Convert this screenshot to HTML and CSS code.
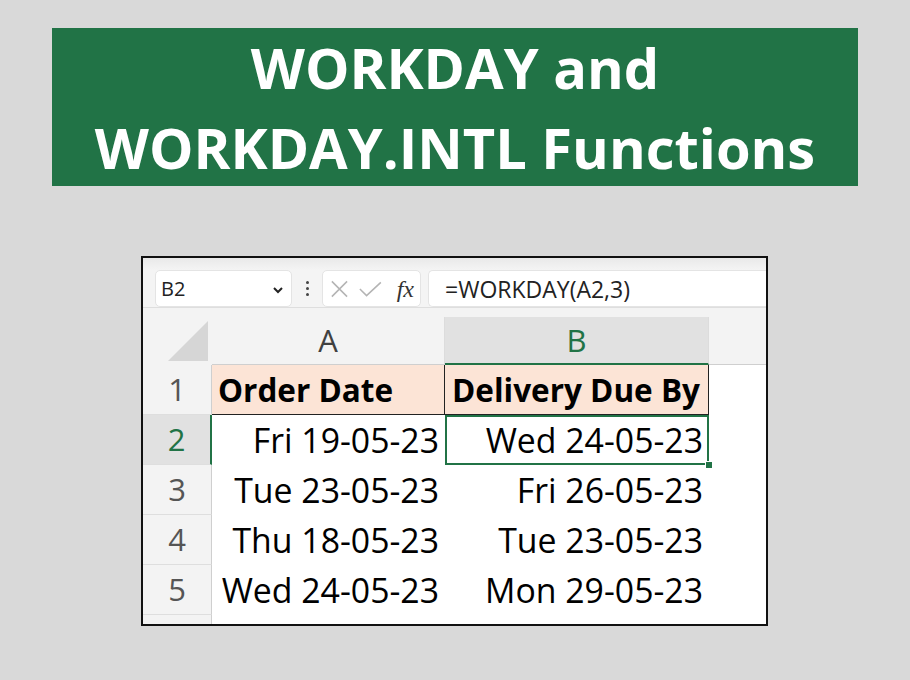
FILE: index.html
```html
<!DOCTYPE html>
<html>
<head>
<meta charset="utf-8">
<link rel="stylesheet" href="styles.css">
</head>
<body>
<div class="banner">
  <h1 class="title">WORKDAY and<br>WORKDAY.INTL Functions</h1>
</div>
<div class="sheet">
  <div class="toolbar">
    <div class="namebox">
      <span>B2</span>
      <svg class="chev" width="12" height="8" viewBox="0 0 12 8"><path d="M2 2 L6 6 L10 2" fill="none" stroke="#222" stroke-width="2"/></svg>
    </div>
    <div class="dots"><i></i><i></i><i></i></div>
    <div class="fxbox">
      <svg width="22" height="22" viewBox="0 0 22 22"><path d="M3 3 L19 19 M19 3 L3 19" stroke="#b4b4b4" stroke-width="1.6" fill="none"/></svg>
      <svg width="26" height="22" viewBox="0 0 26 22"><path d="M2 11 L9 18 L24 4" stroke="#b4b4b4" stroke-width="1.6" fill="none"/></svg>
      <span class="fx">fx</span>
    </div>
    <div class="formula">=WORKDAY(A2,3)</div>
  </div>
  <div class="grid">
    <div class="corner"><div class="tri"></div></div>
    <div class="colhead">A</div>
    <div class="colhead sel">B</div>
    <div class="colrest"></div>

    <div class="rowhead">1</div>
    <div class="cell hdr a">Order Date</div>
    <div class="cell hdr b">Delivery Due By</div>
    <div class="cell"></div>

    <div class="rowhead selrow">2</div>
    <div class="cell num">Fri 19-05-23</div>
    <div class="cell num active">Wed 24-05-23<span class="handle"></span></div>
    <div class="cell"></div>

    <div class="rowhead">3</div>
    <div class="cell num">Tue 23-05-23</div>
    <div class="cell num">Fri 26-05-23</div>
    <div class="cell"></div>

    <div class="rowhead">4</div>
    <div class="cell num">Thu 18-05-23</div>
    <div class="cell num">Tue 23-05-23</div>
    <div class="cell"></div>

    <div class="rowhead">5</div>
    <div class="cell num">Wed 24-05-23</div>
    <div class="cell num">Mon 29-05-23</div>
    <div class="cell"></div>

    <div class="rowhead last"></div>
    <div class="cell"></div>
    <div class="cell"></div>
    <div class="cell"></div>
  </div>
</div>
</body>
</html>
```

FILE: styles.css
```css
html, body {
  margin: 0;
  padding: 0;
  background: #d9d9d9;
  font-family: "Open Sans", "DejaVu Sans", sans-serif;
}
body {
  width: 910px;
  height: 680px;
  overflow: hidden;
  padding-top: 28px;
  box-sizing: border-box;
}
.banner {
  margin: 0 52px;
  height: 158px;
  background: #217346;
  display: flex;
  align-items: center;
  justify-content: center;
}
.title {
  margin: 0;
  color: #fff;
  font-weight: 700;
  font-size: 56px;
  line-height: 80px;
  text-align: center;
}
.sheet {
  margin: 70px 0 0 141px;
  width: 627px;
  height: 370px;
  box-sizing: border-box;
  border: 2px solid #111;
  background: #fff;
  overflow: hidden;
}
.toolbar {
  height: 50px;
  box-sizing: border-box;
  background: linear-gradient(#e9e9e9, #f4f4f4 12px, #f4f4f4);
  border-bottom: 1px solid #dedede;
  display: flex;
  align-items: flex-start;
  padding: 12px 0 0 12px;
}
.namebox, .fxbox, .formula {
  height: 37px;
  background: #fff;
  border-radius: 5px;
  box-sizing: border-box;
  border: 1px solid #e4e4e4;
  display: flex;
  align-items: center;
}
.namebox {
  width: 137px;
  padding: 0 7px 0 5px;
  justify-content: space-between;
  font-size: 20px;
  color: #222;
}
.chev { margin-top: 2px; }
.dots {
  width: 30px;
  height: 37px;
  display: flex;
  flex-direction: column;
  align-items: center;
  justify-content: center;
  gap: 3px;
}
.dots i {
  width: 3px;
  height: 3px;
  background: #444;
  border-radius: 50%;
}
.fxbox {
  width: 99px;
  padding: 0 6px;
  gap: 8px;
}
.fx {
  font-family: "Liberation Serif", "DejaVu Serif", serif;
  font-style: italic;
  font-size: 24px;
  color: #333;
  margin-left: 6px;
  line-height: 1;
}
.formula {
  margin-left: 7px;
  flex: 1;
  border-right: none;
  border-radius: 5px 0 0 5px;
  padding-left: 16px;
  font-size: 23px;
  color: #222;
}
.grid {
  display: grid;
  grid-template-columns: 69px 233px 264px 1fr;
  grid-template-rows: 48px repeat(5, 50px) 1fr;
  height: 317px;
  padding-top: 9px;
  background: #f3f3f3;
  box-sizing: border-box;
}
.corner {
  background: #f3f3f3;
  position: relative;
}
.tri {
  position: absolute;
  right: 4px;
  bottom: 4px;
  width: 0;
  height: 0;
  border-left: 40px solid transparent;
  border-bottom: 40px solid #d6d6d6;
}
.colhead {
  background: #f3f3f3;
  border-bottom: 1px solid #cfcfcf;
  border-right: 1px solid #dcdcdc;
  text-align: center;
  font-size: 31px;
  line-height: 47px;
  color: #404040;
}
.colhead.sel {
  background: #e1e1e1;
  color: #217346;
  border-bottom: 2px solid #217346;
  line-height: 46px;
}
.colrest {
  background: #f3f3f3;
  border-bottom: 1px solid #cfcfcf;
}
.rowhead {
  background: #f3f3f3;
  border-bottom: 1px solid #dedede;
  border-right: 1px solid #cfcfcf;
  text-align: center;
  font-size: 31px;
  line-height: 49px;
  color: #555;
}
.rowhead.selrow {
  background: #e1e1e1;
  color: #217346;
  border-right: 2px solid #217346;
}
.rowhead.last { border-bottom: none; }
.cell {
  background: #fff;
  font-size: 33.8px;
  line-height: 50px;
  color: #000;
  white-space: nowrap;
  position: relative;
}
.cell.hdr {
  background: #fce4d6;
  font-weight: 700;
  border-bottom: 1px solid #222;
  font-size: 31.5px;
  line-height: 49px;
}
.cell.hdr.a { border-right: 1px solid #222; padding-left: 6px; }
.cell.hdr.b { border-right: 1px solid #222; padding-left: 7px; }
.cell.num {
  text-align: right;
  padding-right: 6px;
}
.cell.active {
  outline: 2px solid #217346;
  outline-offset: -2px;
}
.handle {
  position: absolute;
  right: -4px;
  bottom: -4px;
  width: 6px;
  height: 6px;
  background: #217346;
  border: 1px solid #fff;
  z-index: 2;
}
```
